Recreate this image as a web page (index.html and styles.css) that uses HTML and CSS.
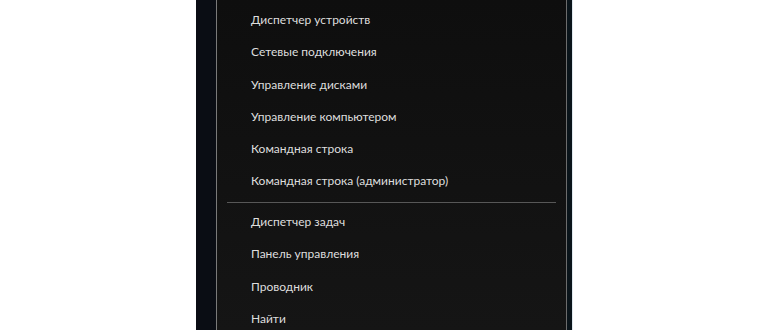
FILE: index.html
```html
<!DOCTYPE html>
<html lang="ru">
<head>
    <meta charset="UTF-8">
    <title>Меню Win+X</title>
    <link rel="stylesheet" href="styles.css">
</head>
<body>
    <div class="menu">
        <div class="edge-left"></div>
        <div class="menu-body">
            <div class="item">Диспетчер устройств</div>
            <div class="item">Сетевые подключения</div>
            <div class="item">Управление дисками</div>
            <div class="item">Управление компьютером</div>
            <div class="item">Командная строка</div>
            <div class="item">Командная строка (администратор)</div>
            <div class="separator"></div>
            <div class="item">Диспетчер задач</div>
            <div class="item">Панель управления</div>
            <div class="item">Проводник</div>
            <div class="item">Найти</div>
        </div>
        <div class="edge-right"></div>
    </div>
</body>
</html>
```

FILE: styles.css
```css
body {
    margin: 0;
    background: #fff;
    font-family: "Lato", "Noto Sans", sans-serif;
}

.menu {
    display: flex;
    width: 377px;
    height: 330px;
    margin-left: 196px;
    overflow: hidden;
}

.edge-left {
    width: 20px;
    background: #0a0d14;
    border-right: 1px solid #7a7a7a;
}

.menu-body {
    flex: 1;
    padding-top: 4px;
    background: linear-gradient(180deg, #0e0e0e 0%, #151515 100%);
    border-right: 1px solid #6c6c6c;
}

.edge-right {
    width: 5px;
    background: #0a141a;
    border-right: 1px solid #dfe8ee;
}

.item {
    height: 32.25px;
    line-height: 32.25px;
    padding-left: 34px;
    font-size: 12px;
    color: #dedede;
    white-space: nowrap;
}

.separator {
    height: 1px;
    margin: 4px 10px 3.5px;
    background: #575757;
}
```
